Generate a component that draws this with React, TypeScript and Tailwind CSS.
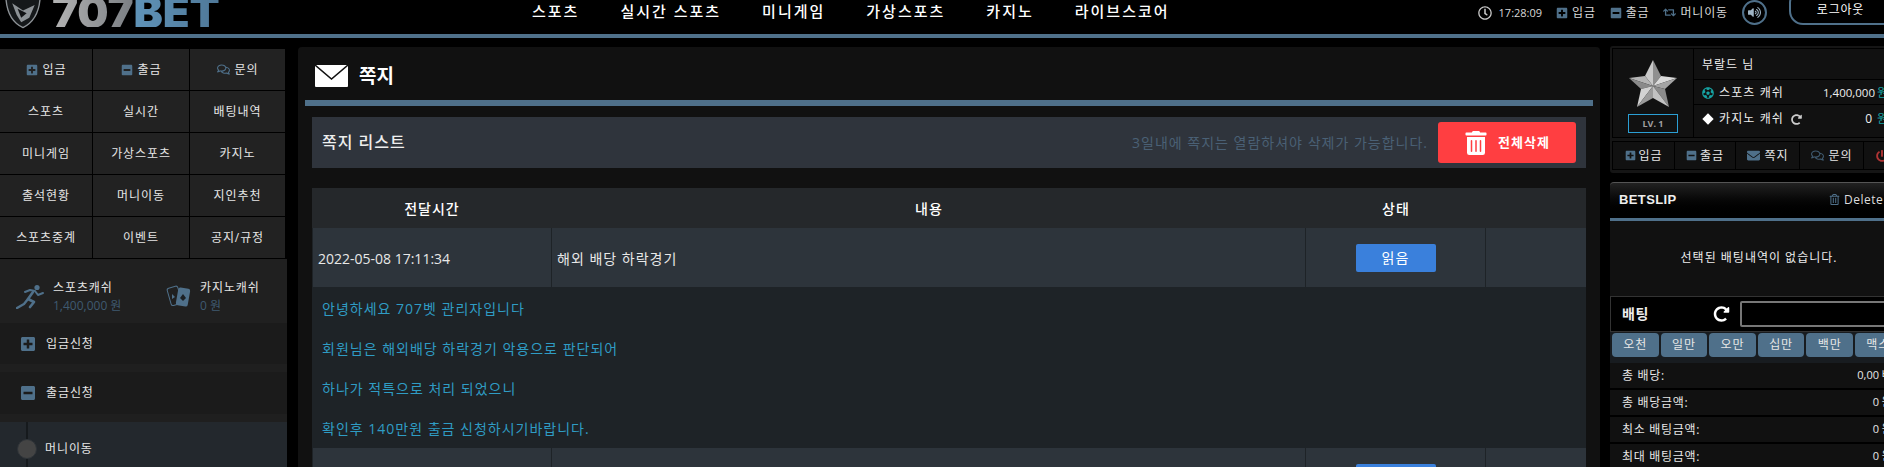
import type { ReactNode } from "react";
import {
  FaFutbol,
  FaMinusSquare,
  FaPlusSquare,
  FaPowerOff,
  FaRedoAlt,
  FaRegClock,
  FaRegComments,
  FaRegTrashAlt,
  FaRetweet,
  FaEnvelope,
  FaTrashAlt,
  FaVolumeUp,
} from "react-icons/fa";

const font = "font-['Open_Sans','Noto_Sans_CJK_KR',sans-serif]";
const navItems = ["스포츠", "실시간 스포츠", "미니게임", "가상스포츠", "카지노", "라이브스코어"];
const menuItems = [
  "스포츠", "실시간", "배팅내역",
  "미니게임", "가상스포츠", "카지노",
  "출석현황", "머니이동", "지인추천",
  "스포츠중계", "이벤트", "공지/규정",
];
const messageLines = [
  "안녕하세요 707벳 관리자입니다",
  "회원님은 해외배당 하락경기 악용으로 판단되어",
  "하나가 적특으로 처리 되었으니",
  "확인후 140만원 출금 신청하시기바랍니다.",
];
const chips = ["오천", "일만", "오만", "십만", "백만", "맥스"];
const totals = [
  { label: "총 배당:", value: "0,00 배" },
  { label: "총 배당금액:", value: "0 원" },
  { label: "최소 배팅금액:", value: "0 원" },
  { label: "최대 배팅금액:", value: "0 원" },
];

function Logo() {
  return (
    <div className="flex h-[30px] w-[532px] shrink-0 items-start pl-[5px]">
      <svg width="36" height="30" viewBox="0 0 40 30" className="shrink-0">
        <path d="M1 -4 L39 -4 C38 12 32 23 20 29 C9 24 2 12 1 -4 Z" fill="#15181a" stroke="#8d9296" strokeWidth="1.5" />
        <path d="M8 2 L20 10 L33 4 L27 18 L18 23 L13 15 Z" fill="#8d9296" />
        <path d="M14 8 L24 13 L18 18 Z" fill="#101214" />
      </svg>
      <span className="ml-[11px] h-[27px] overflow-hidden text-[44px] leading-[25px] font-black tracking-[-0.2px] font-['Inter',sans-serif]">
        <span className="bg-gradient-to-r from-[#b4b4b4] to-[#7b7f83] bg-clip-text text-transparent">707</span>
        <span className="bg-gradient-to-r from-[#5f93b8] to-[#4f7898] bg-clip-text text-transparent">BET</span>
      </span>
    </div>
  );
}

function Header() {
  return (
    <header className="h-[38px] border-b-4 border-[#4f708a] bg-black">
      <div className="flex h-[34px] items-start overflow-hidden">
        <Logo />
        <nav className="flex shrink-0 gap-[41px] pt-[2px] text-[15px] leading-[18px] font-medium tracking-[2px] text-white">
          {navItems.map((item) => (
            <span key={item}>{item}</span>
          ))}
        </nav>
        <div className="ml-[308px] flex shrink-0 items-center text-[12px] leading-[22px] tracking-[0.8px] text-[#d8d8d8]">
          <FaRegClock className="text-[14px] text-[#c8c8c8]" />
          <span className="ml-[7px] text-[11px] tracking-normal">17:28:09</span>
          <FaPlusSquare className="ml-[14px] text-[12px] text-[#4f708a]" />
          <span className="ml-[4px]">입금</span>
          <FaMinusSquare className="ml-[14px] text-[12px] text-[#4f708a]" />
          <span className="ml-[4px]">출금</span>
          <FaRetweet className="ml-[14px] text-[13px] text-[#4f708a]" />
          <span className="ml-[4px]">머니이동</span>
          <span className="ml-[14px] flex h-[25px] w-[25px] items-center justify-center rounded-full border-2 border-[#4f708a] text-[#9fb4c4]">
            <FaVolumeUp className="text-[13px]" />
          </span>
          <span className="ml-[22px] -mt-[11px] flex h-[36px] w-[110px] items-end rounded-[14px] border-2 border-[#4f708a] pb-[4px] pl-[26px] text-[12px] leading-[18px] text-white">
            로그아웃
          </span>
        </div>
      </div>
    </header>
  );
}

function Cell({ children }: { children: ReactNode }) {
  return (
    <div className="flex h-[41px] items-center justify-center gap-[5px] bg-[#222222] text-[12px] tracking-[0.9px] text-[#e6e6e6]">
      {children}
    </div>
  );
}

function RunnerIcon() {
  return (
    <svg width="28" height="25" viewBox="0 0 28 25" className="shrink-0">
      <circle cx="21" cy="3.5" r="2.6" fill="#4f708a" />
      <path d="M9 8 L14 6 L19 7 L22 11 L27 9" fill="none" stroke="#4f708a" strokeWidth="2" strokeLinecap="round" strokeLinejoin="round" />
      <path d="M17 8 L12 15 L18 18 L14 23" fill="none" stroke="#4f708a" strokeWidth="2.6" strokeLinecap="round" strokeLinejoin="round" />
      <path d="M12 15 L8 20 L1 24" fill="none" stroke="#4f708a" strokeWidth="2.4" strokeLinecap="round" strokeLinejoin="round" />
    </svg>
  );
}

function CardsIcon() {
  return (
    <svg width="27" height="24" viewBox="0 0 27 24" className="shrink-0">
      <rect x="4" y="2" width="11" height="18" rx="2" transform="rotate(-16 9 11)" fill="none" stroke="#4f708a" strokeWidth="1" />
      <rect x="12" y="3" width="12" height="18" rx="2" transform="rotate(10 18 12)" fill="#4f708a" />
      <path d="M18 9 L21 13 L18 16 L15 13 Z" fill="#1c2024" />
      <path d="M7 9 L10 12 L7 14 Z" fill="#4f708a" />
    </svg>
  );
}

function LeftColumn() {
  return (
    <aside className="w-[287px] shrink-0 pt-[11px]">
      <div className="grid w-[285px] grid-cols-[92px_96px_95px] gap-px">
        <Cell>
          <FaPlusSquare className="text-[12px] text-[#4f708a]" />입금
        </Cell>
        <Cell>
          <FaMinusSquare className="text-[12px] text-[#4f708a]" />출금
        </Cell>
        <Cell>
          <FaRegComments className="text-[13px] text-[#4f708a]" />문의
        </Cell>
        {menuItems.map((item) => (
          <Cell key={item}>{item}</Cell>
        ))}
      </div>
      <div className="mt-px bg-[#1f1f1f]">
        <div className="flex h-[64px] items-center bg-[#202020] pl-[16px] pt-[11px]">
          <RunnerIcon />
          <div className="ml-[9px] w-[112px] text-[12px] leading-[18px] tracking-[0.9px]">
            <p className="text-[#e6e6e6]">스포츠캐쉬</p>
            <p className="tracking-normal text-[#3f5a70]">1,400,000 원</p>
          </div>
          <CardsIcon />
          <div className="ml-[8px] text-[12px] leading-[18px] tracking-[0.9px]">
            <p className="text-[#e6e6e6]">카지노캐쉬</p>
            <p className="tracking-normal text-[#3f5a70]">0 원</p>
          </div>
        </div>
        <div className="flex h-[41px] items-center bg-[#1b1b1b] pl-[20px] text-[12px] tracking-[0.9px] text-[#e6e6e6]">
          <FaPlusSquare className="text-[16px] text-[#4f708a]" />
          <span className="ml-[10px]">입금신청</span>
        </div>
        <div className="mt-[8px] flex h-[42px] items-center bg-[#1b1b1b] pl-[20px] text-[12px] tracking-[0.9px] text-[#e6e6e6]">
          <FaMinusSquare className="text-[16px] text-[#4f708a]" />
          <span className="ml-[10px]">출금신청</span>
        </div>
        <div className="relative mt-[8px] flex h-[54px] items-center bg-[#23282d] pl-[17px] text-[12px] tracking-[0.9px] text-[#e6e6e6]">
          <span className="absolute left-[26px] top-0 h-full w-[2px] bg-[#161a1d]" />
          <span className="relative h-[20px] w-[20px] rounded-full border border-[#2e3338] bg-[#444444]" />
          <span className="ml-[8px]">머니이동</span>
        </div>
      </div>
    </aside>
  );
}

function MessageRow() {
  return (
    <div className="grid h-[60px] grid-cols-[239px_754px_180px_100px] border-l border-[#1e2327] bg-[#2d343b] text-[14px] text-[#e8e8e8]">
      <div className="flex items-center border-r border-b border-[#1e2327] pl-[5px] pt-[2px]">2022-05-08 17:11:34</div>
      <div className="flex items-center border-r border-b border-[#1e2327] pl-[5px] pt-[2px] tracking-[1px]">해외 배당 하락경기</div>
      <div className="flex items-center justify-center border-r border-b border-[#1e2327]">
        <span className="flex h-[28px] w-[80px] items-center justify-center rounded-[2px] bg-[#3a80dc] tracking-[1px] text-white">읽음</span>
      </div>
      <div className="border-b border-[#1e2327]" />
    </div>
  );
}

function MainPanel() {
  return (
    <main className="ml-[11px] mt-[9px] h-[420px] w-[1302px] shrink-0 overflow-hidden rounded-t-[4px] bg-[#111111] px-[7px]">
      <div className="flex h-[53px] items-center pl-[10px]">
        <svg width="33" height="22" viewBox="0 0 33 22" className="mt-[5px] shrink-0">
          <rect width="33" height="22" rx="1" fill="#ffffff" />
          <path d="M0 0 L16.5 14 L33 0" fill="none" stroke="#111111" strokeWidth="1.5" />
        </svg>
        <h1 className="ml-[11px] mt-[6px] text-[19px] font-bold text-white">쪽지</h1>
      </div>
      <div className="h-[6px] bg-[#4f708a]" />
      <div className="px-[7px]">
        <div className="mt-[11px] flex h-[51px] items-center bg-[#2f343c] pl-[10px] pr-[10px]">
          <h2 className="mb-[2px] text-[16px] font-medium tracking-[1px] text-[#eeeeee]">쪽지 리스트</h2>
          <p className="ml-auto text-[14px] tracking-[1px] text-[#4a6075]">3일내에 쪽지는 열람하셔야 삭제가 가능합니다.</p>
          <span className="ml-[10px] flex h-[41px] w-[138px] items-center justify-center gap-[10px] rounded-[3px] bg-[#ff3e41] text-[13px] font-bold tracking-[1px] text-white">
            <FaTrashAlt className="text-[24px]" />
            전체삭제
          </span>
        </div>
        <div className="mt-[20px] grid h-[40px] grid-cols-[240px_754px_180px_100px] items-center bg-[#25282b] text-center text-[14px] font-medium tracking-[1px] text-white">
          <span>전달시간</span>
          <span>내용</span>
          <span>상태</span>
          <span />
        </div>
        <MessageRow />
        <div className="h-[160px] bg-[#1e2327] pl-[10px] pt-[1px] text-[14px] leading-[40px] tracking-[1px] text-[#2f9cc4]">
          {messageLines.map((line) => (
            <p key={line}>{line}</p>
          ))}
        </div>
        <MessageRow />
      </div>
    </main>
  );
}

function Star() {
  return (
    <svg width="50" height="50" viewBox="0 0 50 50">
      <polygon points="25,1 25,27 17,17" fill="#c9c9c9" />
      <polygon points="25,1 33,17 25,27" fill="#8f8f8f" />
      <polygon points="1,19 17,17 25,27" fill="#b4b4b4" />
      <polygon points="49,19 33,17 25,27" fill="#dadada" />
      <polygon points="1,19 25,27 13,30" fill="#8a8a8a" />
      <polygon points="49,19 37,30 25,27" fill="#a4a4a4" />
      <polygon points="13,30 25,27 9,48" fill="#d2d2d2" />
      <polygon points="37,30 41,48 25,27" fill="#8b8b8b" />
      <polygon points="25,27 25,39 9,48" fill="#9b9b9b" />
      <polygon points="25,27 41,48 25,39" fill="#c2c2c2" />
    </svg>
  );
}

function ProfileBox() {
  return (
    <div className="h-[127px] rounded-[3px] bg-[#151515] p-[2px]">
      <div className="flex h-[90px] gap-px bg-black p-px">
        <div className="flex w-[80px] shrink-0 flex-col items-center bg-[#111111] pt-[10px]">
          <Star />
          <span className="mt-[5px] flex h-[19px] w-[50px] items-center justify-center border border-[#2b9fd4] text-[9px] font-bold text-[#a0a0a0]">LV. 1</span>
        </div>
        <div className="flex w-[260px] flex-col gap-px text-[12px] text-[#eeeeee]">
          <div className="flex h-[30px] items-center bg-[#111111] pl-[8px] pt-[3px] tracking-[1px]">부랄드 님</div>
          <div className="flex h-[25px] items-center bg-[#111111] pl-[8px] pt-[1px]">
            <FaFutbol className="w-[12px] text-[12px] text-[#16a3a3]" />
            <span className="ml-[5px] w-[104px] tracking-[1.1px]">스포츠 캐쉬</span>
            <span className="w-[49px] text-right text-[11.5px] whitespace-nowrap">1,400,000</span>
            <span className="ml-[5px] text-[#16a3a3]">원</span>
          </div>
          <div className="flex h-[32px] items-center bg-[#111111] pb-[4px] pl-[8px]">
            <span className="ml-[2px] h-[8px] w-[8px] rotate-45 bg-white" />
            <span className="ml-[7px] w-[62px] whitespace-nowrap tracking-[1.1px]">카지노 캐쉬</span>
            <FaRedoAlt className="ml-[10px] w-[11px] text-[11px] text-[#cccccc]" />
            <span className="ml-[21px] w-[49px] text-right">0</span>
            <span className="ml-[5px] text-[#16a3a3]">원</span>
          </div>
        </div>
      </div>
      <div className="mt-[3px] flex h-[29px] gap-px bg-black p-px text-[12px] tracking-[0.9px] text-[#e6e6e6]">
        <span className="flex w-[61px] items-center justify-center gap-[3px] bg-[#111111]">
          <FaPlusSquare className="text-[11px] text-[#4f708a]" />입금
        </span>
        <span className="flex w-[60px] items-center justify-center gap-[3px] bg-[#111111]">
          <FaMinusSquare className="text-[11px] text-[#4f708a]" />출금
        </span>
        <span className="flex w-[63px] items-center justify-center gap-[5px] bg-[#111111]">
          <FaEnvelope className="text-[13px] text-[#4f708a]" />쪽지
        </span>
        <span className="flex w-[63px] items-center justify-center gap-[5px] bg-[#111111]">
          <FaRegComments className="text-[13px] text-[#3f5a70]" />문의
        </span>
        <span className="flex w-[80px] items-center bg-[#111111] pl-[12px]">
          <FaPowerOff className="text-[12px] text-[#b03434]" />
        </span>
      </div>
    </div>
  );
}

function Betslip() {
  return (
    <div className="mt-[9px]">
      <div className="flex h-[36px] items-center rounded-t-[4px] border-t border-[#555555] bg-gradient-to-b from-[#222222] to-[#000000] pb-[2px] pl-[9px] text-[12px]">
        <span className="w-[210px] text-[13px] font-bold tracking-[0.4px] text-[#eeeeee] font-['Liberation_Sans',sans-serif]">BETSLIP</span>
        <FaRegTrashAlt className="text-[11px] text-[#4f708a]" />
        <span className="ml-[4px] whitespace-nowrap tracking-[0.5px] text-[#dddddd]">Delete All</span>
      </div>
      <div className="h-[3px] bg-[#4f708a]" />
      <div className="flex h-[75px] items-center justify-center bg-[#111111] text-[12px] tracking-[1px] text-[#eeeeee]">
        <span className="-ml-[46px] mb-[2px]">선택된 배팅내역이 없습니다.</span>
      </div>
      <div className="flex h-[36px] items-center border border-[#333333] bg-black pb-[1px] pl-[11px]">
        <span className="w-[91px] text-[14px] font-bold tracking-[0.5px] text-[#eeeeee]">배팅</span>
        <FaRedoAlt className="w-[17px] text-[16px] text-white" />
        <span className="ml-[10px] h-[26px] w-[200px] rounded-[2px] border-2 border-[#777777] bg-black" />
      </div>
      <div className="flex gap-[2px] bg-[#181c20] px-[2px] pb-[6px] pt-[1px]">
        {chips.map((chip) => (
          <span key={chip} className="flex h-[24px] w-[46.6px] shrink-0 items-center justify-center rounded-[4px] bg-[#4f708a] text-[12px] tracking-[0.9px] text-[#e6e6e6]">
            {chip}
          </span>
        ))}
      </div>
      <div className="flex flex-col gap-[2px] bg-black">
        {totals.map(({ label, value }) => (
          <div key={label} className="flex h-[25px] items-center bg-[#111111] pl-[12px] text-[12px] text-[#e6e6e6]">
            <span className="tracking-[0.7px]">{label}</span>
            <span className="ml-auto pr-[62px] text-[11px]">{value}</span>
          </div>
        ))}
      </div>
    </div>
  );
}

export default function App() {
  return (
    <div className={`h-[467px] w-[1884px] overflow-hidden bg-black ${font}`}>
      <Header />
      <div className="flex">
        <LeftColumn />
        <MainPanel />
        <aside className="ml-[10px] mt-[8px] w-[344px] shrink-0">
          <ProfileBox />
          <Betslip />
        </aside>
      </div>
    </div>
  );
}
